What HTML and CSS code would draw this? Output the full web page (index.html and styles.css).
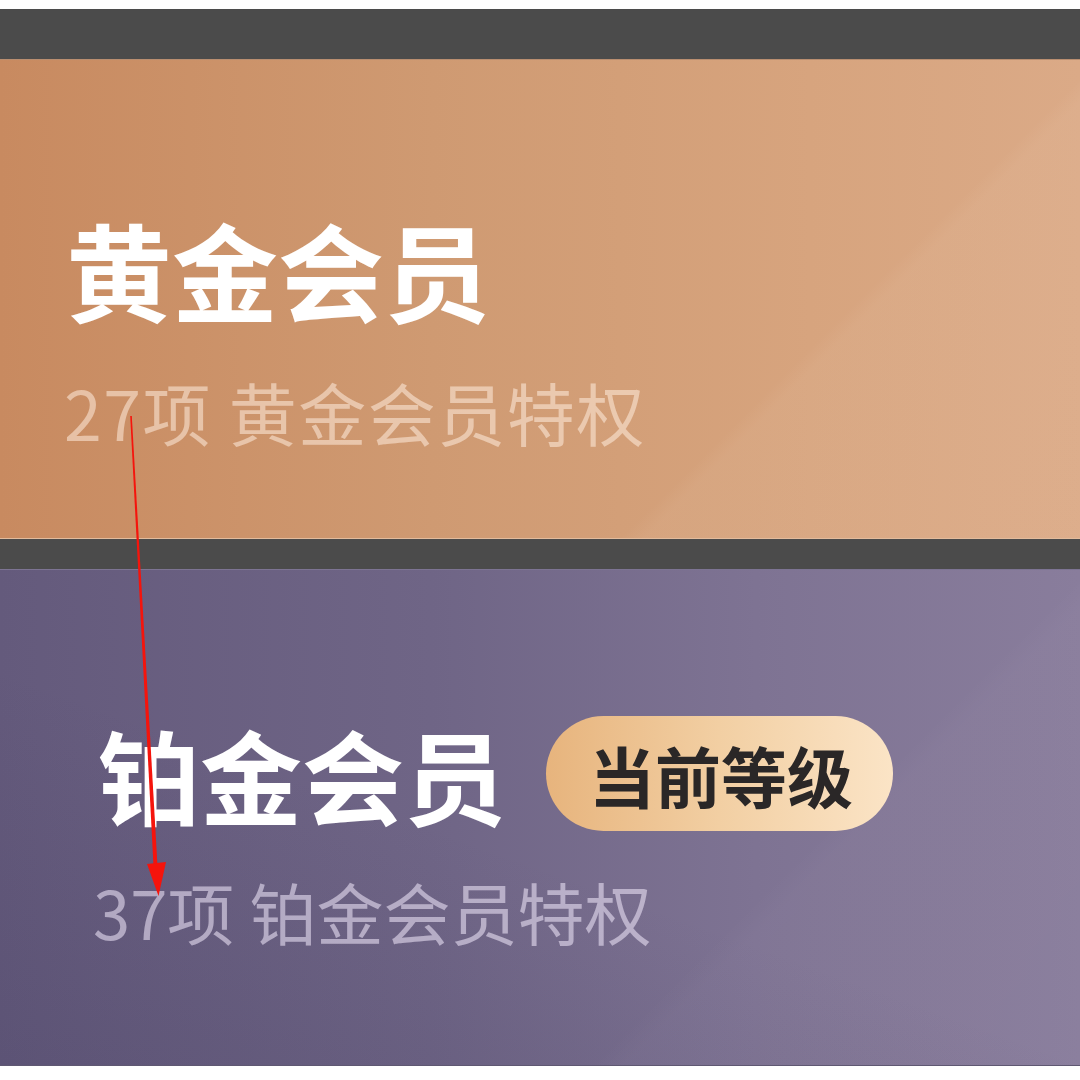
FILE: index.html
```html
<!DOCTYPE html>
<html lang="zh-CN">
<head>
<meta charset="utf-8">
<title>会员等级</title>
<link rel="stylesheet" href="styles.css">
</head>
<body>
<div class="page">
  <div class="bar bar-top"></div>
  <section class="card card-gold">
    <h2 class="title">黄金会员</h2>
    <p class="sub">27项 黄金会员特权</p>
  </section>
  <div class="bar bar-mid"></div>
  <section class="card card-plat">
    <div class="row">
      <h2 class="title">铂金会员</h2>
      <span class="badge">当前等级</span>
    </div>
    <p class="sub">37项 铂金会员特权</p>
  </section>
  <svg class="arrow" width="1080" height="1080" viewBox="0 0 1080 1080">
    <polygon points="130.2,416 131.8,416 157.6,868 153.6,868" fill="#f5140c"/>
    <polygon points="147,864 166,862 158.5,896" fill="#f5140c"/>
  </svg>
</div>
</body>
</html>
```
FILE: styles.css
```css
* { box-sizing: border-box; }
html, body { margin: 0; padding: 0; background: #ffffff; }
body {
  font-family: "Noto Sans CJK SC", "Noto Sans", sans-serif;
}
.page {
  position: relative;
  width: 1080px;
  height: 1080px;
  padding-top: 9px;
  overflow: hidden;
}
.bar { background: #4b4b4b; }
.bar-top { height: 50px; }
.bar-mid { height: 30px; }

.card {
  display: flex;
  flex-direction: column;
  align-items: flex-start;
}
.card-gold {
  height: 480px;
  padding: 155px 0 0 64px;
  background:
    linear-gradient(135deg, rgba(255,255,255,0) 70.5%, rgba(255,240,225,0.06) 72%, rgba(255,240,225,0.05) 100%),
    linear-gradient(90deg, #c88a60 0%, #cf9a72 40%, #d7a47e 75%, #dbaa87 100%);
  border-top: 1px solid #b98e70;
  border-bottom: 1px solid #e2bb9c;
}
.card-plat {
  height: 497px;
  padding: 146px 0 0 93px;
  background:
    linear-gradient(135deg, rgba(255,255,255,0) 69%, rgba(255,240,255,0.025) 71%, rgba(255,240,255,0.02) 100%),
    linear-gradient(20deg, rgba(60,55,90,0.2) 0%, rgba(60,55,90,0) 45%),
    linear-gradient(90deg, #645a7c 0%, #6f6586 40%, #7e7393 70%, #897d9c 100%);
  border-top: 1px solid #7d7493;
  border-bottom: 1px solid #5f5872;
}

.title {
  margin: 0;
  font-size: 106px;
  line-height: 1;
  font-weight: 700;
  color: #ffffff;
  letter-spacing: 0;
}
.card-gold .title { margin-left: 2px; }
.card-plat .title { margin-left: 5px; font-size: 102px; }

.sub {
  margin: 57px 0 0 0;
  font-size: 68px;
  line-height: 1;
  font-weight: 400;
  letter-spacing: 1.5px;
}
.card-gold .sub { color: rgba(255, 236, 222, 0.55); }
.card-plat .sub { color: rgba(236, 228, 246, 0.58); margin-top: 46px; font-size: 67px; letter-spacing: 0; }

.row {
  display: flex;
  align-items: center;
  gap: 40px;
}
.badge {
  display: inline-flex;
  align-items: center;
  height: 115px;
  padding: 0 40px 0 43px;
  border-radius: 58px;
  background: linear-gradient(90deg, #e7b47d 0%, #f2cfa3 50%, #fbe4c6 100%);
  color: #2a2727;
  font-size: 66px;
  font-weight: 700;
  line-height: 1;
}

.arrow {
  position: absolute;
  left: 0;
  top: 0;
  pointer-events: none;
}
```
